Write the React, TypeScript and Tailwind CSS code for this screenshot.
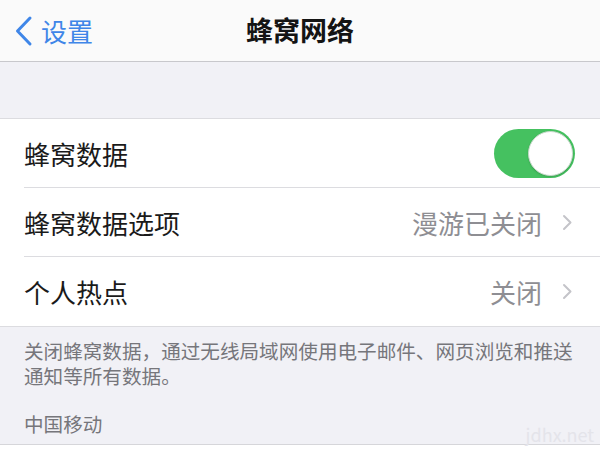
import React from "react";

const font = { fontFamily: '"Noto Sans CJK SC", "Noto Sans", sans-serif' };

function Chevron() {
  return (
    <svg width="11" height="17" viewBox="0 0 11 17" className="ml-[20px]">
      <path d="M2 2 L8.5 8.5 L2 15" fill="none" stroke="#c4c4c9" strokeWidth="2" strokeLinecap="round" strokeLinejoin="round" />
    </svg>
  );
}

function Toggle() {
  return (
    <div className="w-[81px] h-[49px] rounded-full bg-[#45c160] flex items-center justify-end p-[2px]">
      <div className="w-[45px] h-[45px] rounded-full bg-white border border-[#c9d9cc] shadow-[0_1px_2px_rgba(0,0,0,0.15)]"></div>
    </div>
  );
}

function Row({ label, value, toggle, last }: { label: string; value?: string; toggle?: boolean; last?: boolean }) {
  return (
    <div className="pl-[24px]">
      <div className={`h-[69px] flex items-center ${toggle ? "pr-[25px]" : "pr-[27px]"} ${last ? "" : "border-b border-[#dcdce0]"}`}>
        <span className="text-[26px] text-[#1a1a1a] flex-1">{label}</span>
        {toggle && <Toggle />}
        {value && (
          <div className="flex items-center">
            <span className="text-[26px] text-[#8e8e93]">{value}</span>
            <Chevron />
          </div>
        )}
      </div>
    </div>
  );
}

export default function App() {
  return (
    <div style={font} className="w-[600px] h-[450px] overflow-hidden bg-[#f1f1f6] flex flex-col relative">
      <div className="h-[62px] bg-[#fafafa] border-b border-[#c8c8cc] grid grid-cols-[1fr_auto_1fr] items-center">
        <div className="flex items-center pl-[14px] text-[#3f86e8]">
          <svg width="19" height="32" viewBox="0 0 19 32">
            <path d="M16 3 L3.5 16 L16 29" fill="none" stroke="#3f86e8" strokeWidth="3" strokeLinecap="round" strokeLinejoin="round" />
          </svg>
          <span className="text-[26px] ml-[8px]">设置</span>
        </div>
        <span className="text-[27px] font-bold text-[#141414]">蜂窝网络</span>
        <div></div>
      </div>
      <div className="h-[56px]"></div>
      <div className="bg-white border-t border-b border-[#dcdce0]">
        <Row label="蜂窝数据" toggle />
        <Row label="蜂窝数据选项" value="漫游已关闭" />
        <Row label="个人热点" value="关闭" last />
      </div>
      <div className="px-[24px] pt-[11px] text-[19.6px] leading-[25px] text-[#76767b]">
        <p className="whitespace-nowrap">关闭蜂窝数据，通过无线局域网使用电子邮件、网页浏览和推送</p>
        <p>通知等所有数据。</p>
        <p className="mt-[23px]">中国移动</p>
      </div>
      <div className="mt-auto h-[6px] bg-white border-t border-[#d6d6da]"></div>
      <span className="absolute right-[6px] bottom-[2px] text-[18px] text-[#e4e4ea]">jdhx.net</span>
    </div>
  );
}
